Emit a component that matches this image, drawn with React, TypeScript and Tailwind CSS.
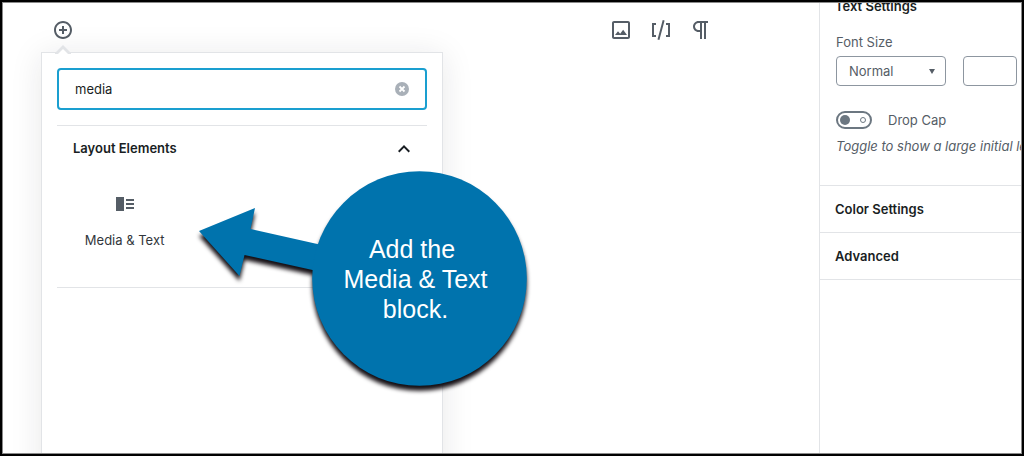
import { useState } from "react";
import type { ReactNode } from "react";

interface IconProps {
  size?: number;
  children: ReactNode;
}

function Icon({ size = 24, children }: IconProps) {
  return (
    <svg width={size} height={size} viewBox={`0 0 ${size} ${size}`} fill="currentColor" aria-hidden="true">
      {children}
    </svg>
  );
}

function BlockInserter() {
  const [search, setSearch] = useState("media");
  const [isOpen, setIsOpen] = useState(true);

  return (
    <div className="absolute -left-3 top-full mt-[10px] h-[428px] w-[402px] border border-[#e2e4e7] bg-white px-[15px] pt-[15px] shadow-[0_3px_30px_rgba(25,30,35,0.1)]">
      {/* Arrow that points at the inserter button */}
      <svg className="absolute -top-2 left-[13px]" width="16" height="9" viewBox="0 0 16 9" aria-hidden="true">
        <path d="M0 8 8 0l8 8v1H0z" fill="#e2e4e7" />
        <path d="M3 9l5-5 5 5z" fill="#fff" />
      </svg>

      <div className="relative">
        <input
          type="text"
          aria-label="Search for a block"
          value={search}
          onChange={(e) => setSearch(e.target.value)}
          className="h-[42px] w-full rounded border-2 border-[#1a9fd0] bg-white px-4 text-[13px] text-[#191e23] outline-none"
        />
        <button
          type="button"
          aria-label="Clear search"
          onClick={() => setSearch("")}
          className="absolute right-[18px] top-[14px] text-[#a9b0b8]"
        >
          <svg className="block" width="14" height="14" viewBox="0 0 14 14" aria-hidden="true">
            <circle cx="7" cy="7" r="7" fill="currentColor" />
            <path d="m4.5 4.5 5 5m0-5-5 5" stroke="#fff" strokeWidth="1.8" />
          </svg>
        </button>
      </div>

      <section className="mt-[15px] border-y border-[#e2e4e7] pb-[38px]">
        <h2>
          <button
            type="button"
            aria-expanded={isOpen}
            onClick={() => setIsOpen(!isOpen)}
            className="flex h-[46px] w-full items-center justify-between pl-4 pr-[11px] text-[13px] font-semibold text-[#191e23]"
          >
            Layout Elements
            <Icon>
              <path d="M12 8l-6 6 1.41 1.41L12 10.83l4.59 4.58L18 14z" />
            </Icon>
          </button>
        </h2>
        {isOpen && (
          <div className="grid grid-cols-3 pl-2 pr-1 pt-5">
            <button type="button" className="flex flex-col items-center gap-[15px] text-[13px] leading-[18px] text-[#32373c]">
              <span className="text-[#555d66]">
                <Icon>
                  <path d="M13 17h8v-2h-8v2zM3 19h8V5H3v14zM13 9h8V7h-8v2zm0 4h8v-2h-8v2z" />
                </Icon>
              </span>
              Media &amp; Text
            </button>
          </div>
        )}
      </section>
    </div>
  );
}

function BlockToolbar() {
  return (
    <div className="flex gap-4">
      <button type="button" aria-label="Image">
        <Icon>
          <path d="M19 5v14H5V5h14m0-2H5c-1.1 0-2 .9-2 2v14c0 1.1.9 2 2 2h14c1.1 0 2-.9 2-2V5c0-1.1-.9-2-2-2z" />
          <path d="M14.14 11.86l-3 3.87L9 13.14 6 17h12l-3.86-5.14z" />
        </Icon>
      </button>
      <button type="button" aria-label="Shortcode">
        <Icon>
          <path d="M8.5 21.4l1.9.5 5.2-19.3-1.9-.5L8.5 21.4zM3 19h4v-2H5V7h2V5H3v14zM17 5v2h2v10h-2v2h4V5h-4z" />
        </Icon>
      </button>
      <button type="button" aria-label="Paragraph">
        <Icon>
          <path d="M11 5v7H9.5C7.6 12 6 10.4 6 8.5S7.6 5 9.5 5H11m8-2H9.5C6.5 3 4 5.5 4 8.5S6.5 14 9.5 14H11v7h2V5h2v16h2V5h2V3z" />
        </Icon>
      </button>
    </div>
  );
}

function SettingsSidebar() {
  const [dropCap, setDropCap] = useState(false);

  return (
    <aside className="w-[202px] shrink-0 overflow-hidden border-l border-[#e2e4e7] text-[13px] leading-[18px] text-[#555d66]">
      <section className="border-b border-[#e2e4e7] pb-[30px] pl-4">
        <h2 className="-ml-px -mt-[6px] font-semibold text-[#191e23]">Text Settings</h2>
        <label htmlFor="font-size" className="mt-[18px] block">
          Font Size
        </label>
        <div className="mt-[5px] flex gap-[17px]">
          <div className="relative w-[110px] shrink-0">
            <select
              id="font-size"
              className="h-[30px] w-full appearance-none rounded border border-[#8d96a0] bg-white pl-3 text-[13px] text-[#555d66]"
            >
              <option>Normal</option>
            </select>
            <svg className="pointer-events-none absolute right-[11px] top-[13px]" width="6" height="5" viewBox="0 0 6 5" aria-hidden="true">
              <path d="M0 0h6L3 5z" fill="#555d66" />
            </svg>
          </div>
          <input
            type="text"
            aria-label="Custom font size"
            className="h-[30px] w-[54px] shrink-0 rounded border border-[#8d96a0] bg-white px-2"
          />
        </div>
        <div className="mt-[25px] flex items-center gap-4">
          <span className="relative block h-[18px] w-9">
            <input
              id="drop-cap"
              type="checkbox"
              checked={dropCap}
              onChange={(e) => setDropCap(e.target.checked)}
              className="peer block h-[18px] w-9 appearance-none rounded-full border-2 border-[#6c7781] bg-white checked:bg-[#11a0d2]"
            />
            <span className="pointer-events-none absolute left-1 top-1 size-[10px] rounded-full bg-[#6c7781] peer-checked:left-[22px] peer-checked:bg-white" />
            <span className="pointer-events-none absolute right-[6px] top-[6px] size-[6px] rounded-full border border-[#6c7781] peer-checked:hidden" />
          </span>
          <label htmlFor="drop-cap">Drop Cap</label>
        </div>
        <p className="mt-2 whitespace-nowrap italic">Toggle to show a large initial letter.</p>
      </section>
      {["Color Settings", "Advanced"].map((title) => (
        <h2 key={title} className="border-b border-[#e2e4e7]">
          <button type="button" className="h-[46px] w-full pl-[15px] text-left font-semibold text-[#191e23]">
            {title}
          </button>
        </h2>
      ))}
    </aside>
  );
}

function Callout() {
  return (
    <div className="pointer-events-none absolute left-[196px] top-[168px] flex h-[216px] w-[329px] justify-end">
      <svg
        className="absolute inset-0 overflow-visible drop-shadow-[0_5px_2px_rgba(20,15,20,1)]"
        width="329"
        height="216"
        viewBox="0 0 329 216"
        fill="#0073ad"
        aria-hidden="true"
      >
        <path d="M0 60 56 37 51.5 58 125 74.5 118 100 45.5 84 40.5 105z" />
        <circle cx="220.5" cy="107.5" r="107.3" />
      </svg>
      <p className="relative flex w-[216px] flex-col justify-center pr-[9px] text-center font-['Liberation_Sans',Arial,sans-serif] text-[25px] leading-[30px] text-white">
        <span className="whitespace-pre">{"Add the "}</span>
        <span>Media &amp; Text</span>
        <span>block.</span>
      </p>
    </div>
  );
}

export default function App() {
  return (
    <div className="h-screen border-2 border-black bg-white font-[Inter,sans-serif]">
      <div className="relative flex h-full overflow-hidden border border-[#8a8a8a]">
        <main className="min-w-0 flex-1">
          <div className="flex justify-between pl-[50px] pr-[106px] pt-[15px] text-[#555d66]">
            <div className="relative flex items-center">
              <button type="button" aria-label="Add block">
                <Icon size={20}>
                  <path d="M10 1c-5 0-9 4-9 9s4 9 9 9 9-4 9-9-4-9-9-9zm0 16c-3.9 0-7-3.1-7-7s3.1-7 7-7 7 3.1 7 7-3.1 7-7 7zm1-11H9v3H6v2h3v3h2v-3h3V9h-3V6z" />
                </Icon>
              </button>
              <BlockInserter />
            </div>
            <BlockToolbar />
          </div>
        </main>
        <SettingsSidebar />
        <Callout />
      </div>
    </div>
  );
}
